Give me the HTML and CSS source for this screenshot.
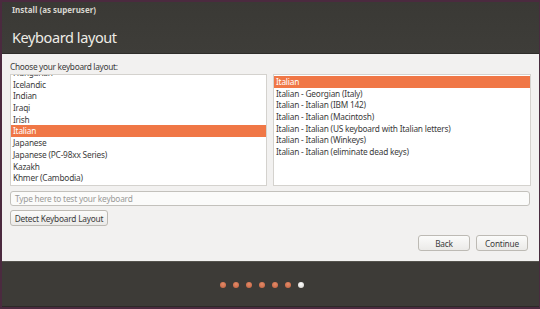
FILE: index.html
```html
<!DOCTYPE html>
<html>
<head>
<meta charset="utf-8">
<link rel="stylesheet" href="styles.css">
</head>
<body>
<div class="window">
  <div class="header">
    <div class="wintitle">Install (as superuser)</div>
    <div class="pagetitle">Keyboard layout</div>
  </div>
  <div class="content">
    <div class="label">Choose your keyboard layout:</div>
    <div class="lists">
      <div class="list left">
        <div class="scroll">
          <div class="row">Hungarian</div>
          <div class="row">Icelandic</div>
          <div class="row">Indian</div>
          <div class="row">Iraqi</div>
          <div class="row">Irish</div>
          <div class="row sel">Italian</div>
          <div class="row">Japanese</div>
          <div class="row">Japanese (PC-98xx Series)</div>
          <div class="row">Kazakh</div>
          <div class="row">Khmer (Cambodia)</div>
        </div>
      </div>
      <div class="list right">
        <div class="scroll">
          <div class="row sel">Italian</div>
          <div class="row">Italian - Georgian (Italy)</div>
          <div class="row">Italian - Italian (IBM 142)</div>
          <div class="row">Italian - Italian (Macintosh)</div>
          <div class="row">Italian - Italian (US keyboard with Italian letters)</div>
          <div class="row">Italian - Italian (Winkeys)</div>
          <div class="row">Italian - Italian (eliminate dead keys)</div>
        </div>
      </div>
    </div>
    <div class="input">Type here to test your keyboard</div>
    <div class="detectrow"><div class="btn detect">Detect Keyboard Layout</div></div>
    <div class="navrow">
      <div class="btn nav">Back</div>
      <div class="btn nav">Continue</div>
    </div>
  </div>
  <div class="footer">
    <div class="dots">
      <span class="dot"></span><span class="dot"></span><span class="dot"></span><span class="dot"></span><span class="dot"></span><span class="dot"></span><span class="dot cur"></span>
    </div>
  </div>
</div>
</body>
</html>
```
FILE: styles.css
```css
html, body {
  margin: 0;
  padding: 0;
}
body {
  background: #4b2a3f;
  width: 540px;
  height: 309px;
  overflow: hidden;
  font-family: "Noto Sans", "DejaVu Sans", sans-serif;
  color: #3c3c3c;
}
.window {
  margin: 2px 1px 0 2px;
  height: 305px;
  display: flex;
  flex-direction: column;
  background: #3c3b37;
}
.header {
  height: 52px;
  box-sizing: border-box;
  padding: 2px 0 0 10px;
  background: linear-gradient(#3a3935, #3e3d39);
  border-bottom: 1px solid #2e2d2a;
}
.wintitle {
  font-size: 8px;
  font-weight: bold;
  color: #d8d6cf;
  line-height: 12px;
  letter-spacing: 0;
}
.pagetitle {
  font-size: 14.5px;
  color: #eeece6;
  line-height: 20px;
  margin-top: 11px;
  letter-spacing: -0.4px;
}
.content {
  background: #f2f1f0;
  height: 207px;
  box-sizing: border-box;
  padding: 7px 8px 0 8px;
  display: flex;
  flex-direction: column;
}
.label {
  font-size: 8.3px;
  line-height: 12px;
  margin-bottom: 1px;
  letter-spacing: -0.3px;
}
.lists {
  display: flex;
  gap: 6px;
}
.list {
  height: 112px;
  background: #ffffff;
  border: 1px solid #d4d2ce;
  box-sizing: border-box;
  overflow: hidden;
}
.left {
  width: 257px;
}
.right {
  width: 258px;
}
.left .scroll {
  margin-top: -8px;
}
.right .scroll {
  margin-top: 1px;
}
.row {
  height: 11.7px;
  line-height: 11.7px;
  font-size: 8.3px;
  padding-left: 2px;
  white-space: nowrap;
  letter-spacing: -0.2px;
}
.row.sel {
  background: #f07746;
  color: #ffffff;
}
.input {
  margin-top: 5px;
  height: 15px;
  box-sizing: border-box;
  border: 1px solid #c3c1bc;
  border-radius: 3px;
  background: #fbfbfa;
  font-size: 8.3px;
  line-height: 13px;
  padding-left: 4px;
  color: #9a9a98;
  width: 520px;
  letter-spacing: -0.2px;
}
.detectrow {
  margin-top: 4px;
  display: flex;
}
.btn {
  box-sizing: border-box;
  border: 1px solid #bdbab4;
  border-radius: 3px;
  background: linear-gradient(#fbfbfa, #ebeae8);
  font-size: 8.3px;
  color: #3c3c3c;
  display: flex;
  align-items: center;
  justify-content: center;
  letter-spacing: -0.2px;
}
.detect {
  width: 98px;
  height: 16px;
}
.navrow {
  margin-top: 9px;
  display: flex;
  justify-content: flex-end;
  gap: 6px;
  padding-right: 3px;
}
.nav {
  width: 52px;
  height: 16px;
}
.footer {
  flex: 1;
  background: #3d3b37;
  border-top: 1px solid #55534d;
  display: flex;
  justify-content: center;
  padding-top: 20px;
  box-sizing: border-box;
  border-bottom: 1px solid #2b2a27;
}
.dots {
  display: flex;
  gap: 7px;
  height: 6px;
  margin-left: -18px;
}
.dot {
  width: 6px;
  height: 6px;
  border-radius: 50%;
  background: radial-gradient(circle at 50% 35%, #e38a68, #c2613f);
}
.dot.cur {
  background: radial-gradient(circle at 50% 35%, #ffffff, #cfcdc8);
}
```
